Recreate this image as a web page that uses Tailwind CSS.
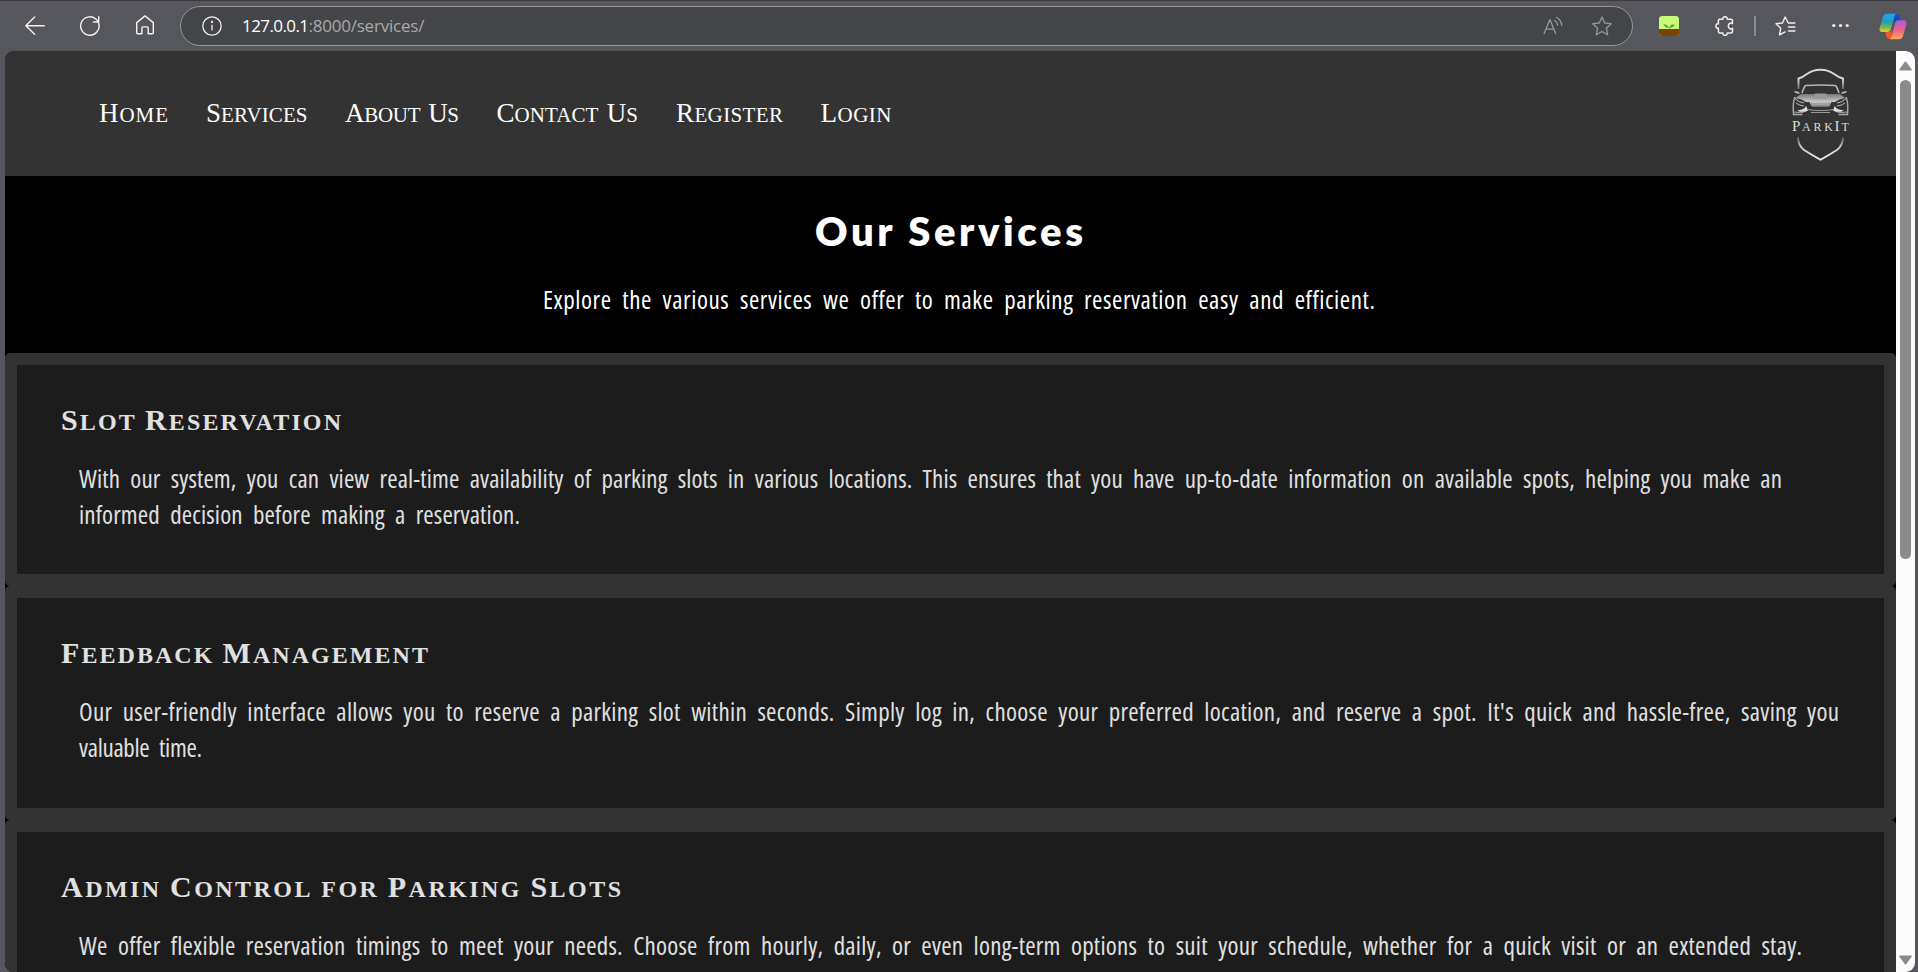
<!DOCTYPE html>
<html lang="en">
<head>
<meta charset="utf-8">
<title>Our Services</title>
<script src="https://cdn.jsdelivr.net/npm/@tailwindcss/browser@4"></script>
</head>
<body class="h-[972px] w-[1918px] overflow-hidden bg-[#56575c] font-['Open_Sans',sans-serif]">
<div class="flex h-full flex-col">
  <!-- Browser toolbar -->
  <div class="flex h-[51px] shrink-0 items-center border-t border-[#3a3a40] pl-[25px] pr-[11px]">
    <svg class="-mt-px size-5 shrink-0" viewBox="0 0 20 20" fill="none" stroke="#f2f2f3" stroke-width="1.4" stroke-linecap="round" stroke-linejoin="round"><path d="M19.3 9.7H.9M9.6 1 .8 9.7l8.8 8.6"/></svg>
    <svg class="ml-[35px] size-5 shrink-0" viewBox="0 0 20 20" fill="none" stroke="#f2f2f3" stroke-width="1.4" stroke-linecap="round" stroke-linejoin="round"><path d="M18.6 7.2A9.2 9.2 0 1 1 15.8 3l2.6 2.6M18.7.8v5.2h-5.3M19.2 10c0-1-.2-2-.6-2.8"/></svg>
    <svg class="ml-[35px] -mt-0.5 size-5 shrink-0" viewBox="0 0 20 20" fill="none" stroke="#f2f2f3" stroke-width="1.4" stroke-linejoin="round"><path d="M1.7 7.6 10 .9l8.3 6.7v10.1q0 1-1 1h-4.1v-5.8q0-1-1-1H7.9q-1 0-1 1v5.8h-4.200q-1 0-1-1z"/></svg>
    <div class="ml-[25px] flex h-10 w-[1453px] shrink-0 items-center rounded-full border border-[#97979a] bg-[#444549] pl-[21px] pr-[20px]">
      <svg class="size-5 shrink-0" viewBox="0 0 20 20" fill="none" stroke="#f0f0f0" stroke-width="1.3"><circle cx="10" cy="10" r="9.2"/><path d="M10 8.700v5.700"/><circle cx="10" cy="5.900" r=".5" fill="#f0f0f0"/></svg>
      <div class="ml-[20px] text-[17px] leading-6 whitespace-nowrap text-[#a9a9ab]"><span data-w="67" class="text-white">127.0.0.1</span><span data-w="116">:8000/services/</span></div>
      <svg class="ml-auto size-5 shrink-0" viewBox="0 0 20 20" fill="none" stroke="#97989b" stroke-width="1.3" stroke-linecap="round" stroke-linejoin="round"><path d="M1 17.700 6.900 3.600l5.900 14.100M3 13.200h7.800M11.700 4.500q2.600 1.700 3 4.600M13.700 1.500q4.400 2.500 5 7.600"/></svg>
      <svg class="ml-[29px] size-5 shrink-0" viewBox="0 0 20 20" fill="none" stroke="#97989b" stroke-width="1.3" stroke-linejoin="round"><path d="m10 1 2.700 6 6.500.700-4.800 4.500 1.300 6.600L10 15.500l-5.700 3.300 1.300-6.600L.8 7.700 7.300 7z"/></svg>
    </div>
    <svg class="ml-[26px] size-5 shrink-0" viewBox="0 0 20 20"><rect width="20" height="20" rx="3" fill="#c8fb7c"/><path d="M0 13h20v4q0 3-3 3H3q-3 0-3-3z" fill="#7a4304"/><path d="M10.200 13.500q-.4-2 .8-3.500 1.800-2 4.600-1.300-.8 2.700-4.600 2.900v2zM9.700 11.800Q6.500 12 4.200 8.200q4.300-.3 5.500 3.600z" fill="#53a820"/></svg>
    <svg class="ml-[36px] size-5 shrink-0" viewBox="0 0 20 20" fill="none" stroke="#f0f0f0" stroke-width="1.5" stroke-linejoin="round"><path d="M4.500 3.200h3.300c-.2-3.300 4.700-3.300 4.500 0H16q1.500 0 1.500 1.500v2.900c-1.200-1.200-4.200-.5-4.200 2.400s3 3.500 4.200 2.400v3q0 1.500-1.500 1.500h-3.700c.2 3.300-4.700 3.300-4.500 0H4.900q-1.500 0-1.500-1.500v-3.200c-3.300 0-3.300-4.700 0-4.500v-3q0-1.500 1.100-1.500z"/></svg>
    <div class="ml-[19px] h-5 w-[1.500px] shrink-0 bg-[#8a8b8f]"></div>
    <svg class="ml-[19px] size-[21px] shrink-0" viewBox="0 0 21 21" fill="none" stroke="#f0f0f0" stroke-width="1.4" stroke-linecap="round" stroke-linejoin="round"><path d="M19.900 7h-6.600L10.100 1 7.500 7 1 7.700l4.700 4.600-1.200 6.600 5.600-3M13.500 11h6.400M13.500 15h6.400"/></svg>
    <svg class="ml-[36px] h-5 w-[17px] shrink-0" viewBox="0 0 17 20" fill="#f2f2f2"><circle cx="1.800" cy="9.500" r="1.600"/><circle cx="8.500" cy="9.500" r="1.600"/><circle cx="15.200" cy="9.500" r="1.600"/></svg>
    <svg class="ml-auto h-[27px] w-[28px] shrink-0" viewBox="0 0 28 27">
      <defs>
        <linearGradient id="cpA" x1="0" y1="0" x2="0" y2="1"><stop offset="0" stop-color="#1fa5f0"/><stop offset=".45" stop-color="#1e9fb8"/><stop offset=".75" stop-color="#7cb94c"/><stop offset="1" stop-color="#edcf24"/></linearGradient>
        <linearGradient id="cpB" x1="0" y1="0" x2="0" y2="1"><stop offset="0" stop-color="#a25be8"/><stop offset=".5" stop-color="#f0608e"/><stop offset="1" stop-color="#ffa650"/></linearGradient>
      </defs>
      <path d="M15 1h2.500q2.500 0 3.200 2.500l1 3.700h-3q-3 0-4 3.500z" fill="#1748c8"/>
      <path d="M12.500 26H10q-2 0-2.700-2.500l-1-4.500h3q3 0 4-3.500z" fill="#ef5a2a"/>
      <path d="M8 .8h9.500q-1.500.6-2.200 3L11.800 16q-.9 3-3.800 3H3.500Q-.3 19 .7 15L4 3.800Q5 .8 8 .8z" fill="url(#cpA)"/>
      <path d="M20 26.200h-9.500q1.500-.6 2.200-3L16.200 10q.9-2.800 3.800-2.800h4.500q3.800 0 2.800 4L24 23.200q-1 3-4 3z" fill="url(#cpB)"/>
    </svg>
  </div>

  <!-- Page viewport -->
  <div class="ml-[5px] mr-[3px] flex min-h-0 flex-1 overflow-hidden rounded-[9px] bg-black">
    <div class="w-[1891px] shrink-0 overflow-hidden">
      <header class="flex h-[125px] items-center justify-between bg-[#333333] pl-[94px] pr-[46px]">
        <nav class="mt-px flex font-['Liberation_Serif',serif] text-[21px] leading-[30px] whitespace-nowrap text-white uppercase">
          <a class="w-[107px]"><span data-w="69"><span class="inline-block first-letter:text-[27px]">Home</span></span></a>
          <a class="w-[139px]"><span data-w="101.5"><span class="inline-block first-letter:text-[27px]">Services</span></span></a>
          <a class="w-[151.500px] [word-spacing:3px]"><span data-w="114"><span class="inline-block first-letter:text-[27px]">About</span> <span class="inline-block first-letter:text-[27px]">Us</span></span></a>
          <a class="w-[179.500px] [word-spacing:3px]"><span data-w="141.5"><span class="inline-block first-letter:text-[27px]">Contact</span> <span class="inline-block first-letter:text-[27px]">Us</span></span></a>
          <a class="w-[144.500px]"><span data-w="107"><span class="inline-block first-letter:text-[27px]">Register</span></span></a>
          <a><span data-w="71"><span class="inline-block first-letter:text-[27px]">Login</span></span></a>
        </nav>
        <svg class="mt-0.5 h-[94px] w-[60px]" viewBox="1790 68 60 94" fill="none">
          <defs><linearGradient id="fadeT" x1="0" y1="0" x2="0" y2="1"><stop offset=".5" stop-color="#d8d8d8"/><stop offset="1" stop-color="#666"/></linearGradient>
          <linearGradient id="fadeB" x1="0" y1="0" x2="0" y2="1"><stop offset="0" stop-color="#555"/><stop offset=".4" stop-color="#c8c8c8"/><stop offset="1" stop-color="#eee"/></linearGradient>
          <linearGradient id="hood" x1="0" y1="0" x2="0" y2="1"><stop offset="0" stop-color="#777"/><stop offset="1" stop-color="#ccc"/></linearGradient></defs>
          <path d="M1798.500 89V78.500q4-1 8-4.200 6-4.500 14-4.500t14 4.500q4 3.200 8.500 4.200V89" stroke="url(#fadeT)" stroke-width="1.900"/>
          <path d="M1802 93q2-6 3.500-7.500 15-1 30 0 1.500 1.500 3.500 7.500" stroke="#b5b5b5" stroke-width="1.700"/>
          <path d="M1800 93.500q-1-3-6-2.200.5 2.200 5 2.400zM1841 93.500q1-3 6-2.200-.5 2.200-5 2.400z" fill="#b5b5b5"/>
          <path d="M1801 94h39l5 4q-6 1-10 4h-29q-4-3-11-4z" fill="url(#hood)"/>
          <path d="M1815 93.500h11l2 5.500h-15z" fill="#999"/>
          <path d="M1795 97q-2.500 5-1.500 17.500h9M1846 97q2.500 5 1.500 17.500h-9" stroke="#aaa" stroke-width="1.400"/>
          <path d="M1795 98.500q4 4 9 4.500M1846 98.500q-4 4-9 4.500M1810 102.500h21l-2 3.500h-17zM1796 103q4 3 8 3M1845 103q-4 3-8 3" stroke="#bdbdbd"/>
          <path d="M1811 103h19l-1.500 2.500h-16z" fill="#a5a5a5"/>
          <path d="M1806 105.500q0 4-9 5 6 3 11 0zM1835 105.500q0 4 9 5-6 3-11 0z" fill="#ddd"/>
          <path d="M1807 109.500q14 2 27 0M1811 112.500h19M1794 112q6 1 10 0M1847 112q-6 1-10 0" stroke="#9a9a9a" stroke-width="1.200"/>
          <g fill="#dcdcdc" font-family="Liberation Serif, serif" font-size="12"><text x="1792" y="131" font-size="15">P</text><text x="1802" y="131" textLength="31" lengthAdjust="spacing">ARK</text><text x="1834.500" y="131" font-size="15">I</text><text x="1841.500" y="131">T</text></g>
          <path d="M1798 137q0 8 6 13 3 2 16.500 9.800Q1834 152 1837 150q6-5 6-13" stroke="url(#fadeB)" stroke-width="1.900"/>
        </svg>
      </header>

      <section class="flex h-[177px] flex-col bg-black pt-[31px] text-white">
        <h1 class="ml-[810px] font-['Lato',sans-serif] text-[40px] leading-[48px] font-extrabold whitespace-nowrap"><span data-w="268">Our Services</span></h1>
        <p class="mt-[26px] ml-[538px] text-[25px] leading-9 font-[370] font-stretch-75% whitespace-nowrap [word-spacing:5.500px]"><span data-w="832">Explore the various services we offer to make parking reservation easy and efficient.</span></p>
      </section>

      <main class="bg-black text-[#e0e0e0]">
        <article class="h-[233px] rounded-[5px] border-[12px] border-[#333333] bg-[#1c1c1c] pt-[35px]">
          <h2 class="ml-[44px] font-['Liberation_Serif',serif] text-[24px] leading-10 font-bold whitespace-nowrap uppercase"><span data-w="280"><span class="inline-block first-letter:text-[30px]">Slot</span> <span class="inline-block first-letter:text-[30px]">Reservation</span></span></h2>
          <p class="mt-[18px] ml-[62px] text-[25px] leading-9 font-[370] font-stretch-75% whitespace-nowrap [word-spacing:5.500px]"><span data-w="1703">With our system, you can view real-time availability of parking slots in various locations. This ensures that you have up-to-date information on available spots, helping you make an</span><br><span data-w="441">informed decision before making a reservation.</span></p>
        </article>
        <article class="h-[234px] rounded-[5px] border-[12px] border-[#333333] bg-[#1c1c1c] pt-[35px]">
          <h2 class="ml-[44px] font-['Liberation_Serif',serif] text-[24px] leading-10 font-bold whitespace-nowrap uppercase"><span data-w="367"><span class="inline-block first-letter:text-[30px]">Feedback</span> <span class="inline-block first-letter:text-[30px]">Management</span></span></h2>
          <p class="mt-[18px] ml-[62px] text-[25px] leading-9 font-[370] font-stretch-75% whitespace-nowrap [word-spacing:5.500px]"><span data-w="1760">Our user-friendly interface allows you to reserve a parking slot within seconds. Simply log in, choose your preferred location, and reserve a spot. It's quick and hassle-free, saving you</span><br><span data-w="123">valuable time.</span></p>
        </article>
        <article class="h-[234px] rounded-[5px] border-[12px] border-[#333333] bg-[#1c1c1c] pt-[35px]">
          <h2 class="ml-[44px] font-['Liberation_Serif',serif] text-[24px] leading-10 font-bold whitespace-nowrap uppercase"><span data-w="560"><span class="inline-block first-letter:text-[30px]">Admin</span> <span class="inline-block first-letter:text-[30px]">Control</span> <span class="inline-block">for</span> <span class="inline-block first-letter:text-[30px]">Parking</span> <span class="inline-block first-letter:text-[30px]">Slots</span></span></h2>
          <p class="mt-[18px] ml-[62px] text-[25px] leading-9 font-[370] font-stretch-75% whitespace-nowrap [word-spacing:5.500px]"><span data-w="1723">We offer flexible reservation timings to meet your needs. Choose from hourly, daily, or even long-term options to suit your schedule, whether for a quick visit or an extended stay.</span></p>
        </article>
      </main>
    </div>

    <!-- Scrollbar -->
    <div class="flex flex-1 flex-col items-center bg-[#fcfcfc] pt-[10px] pb-[7px]">
      <svg class="h-[10px] w-[13px] shrink-0" viewBox="0 0 13 10" fill="#8b8b8b" stroke="#8b8b8b" stroke-width="1.500" stroke-linejoin="round"><path d="M6.500 1.200 12 8.800H1z"/></svg>
      <div class="mt-[9px] h-[479px] w-[11px] shrink-0 rounded-full bg-[#8b8b8b]"></div>
      <svg class="mt-auto h-[10px] w-[13px] shrink-0" viewBox="0 0 13 10" fill="#8b8b8b" stroke="#8b8b8b" stroke-width="1.500" stroke-linejoin="round"><path d="M6.500 8.800 12 1.200H1z"/></svg>
    </div>
  </div>
</div>
<script>
  // Track each line of lettering to its set width; repeated passes absorb
  // the small change that comes from kerning and ligatures switching off.
  function track() {
    document.querySelectorAll('[data-w]').forEach(function (el) {
      var n = el.textContent.length, spacing = 0.01;
      for (var i = 0; i < 3; i++) {
        el.style.letterSpacing = spacing + 'px';
        spacing += (el.dataset.w - el.getBoundingClientRect().width + spacing) / n;
      }
      el.style.letterSpacing = spacing + 'px';
    });
  }
  window.addEventListener('load', function () {
    track();
    document.fonts.ready.then(track);
  });
</script>
</body>
</html>
